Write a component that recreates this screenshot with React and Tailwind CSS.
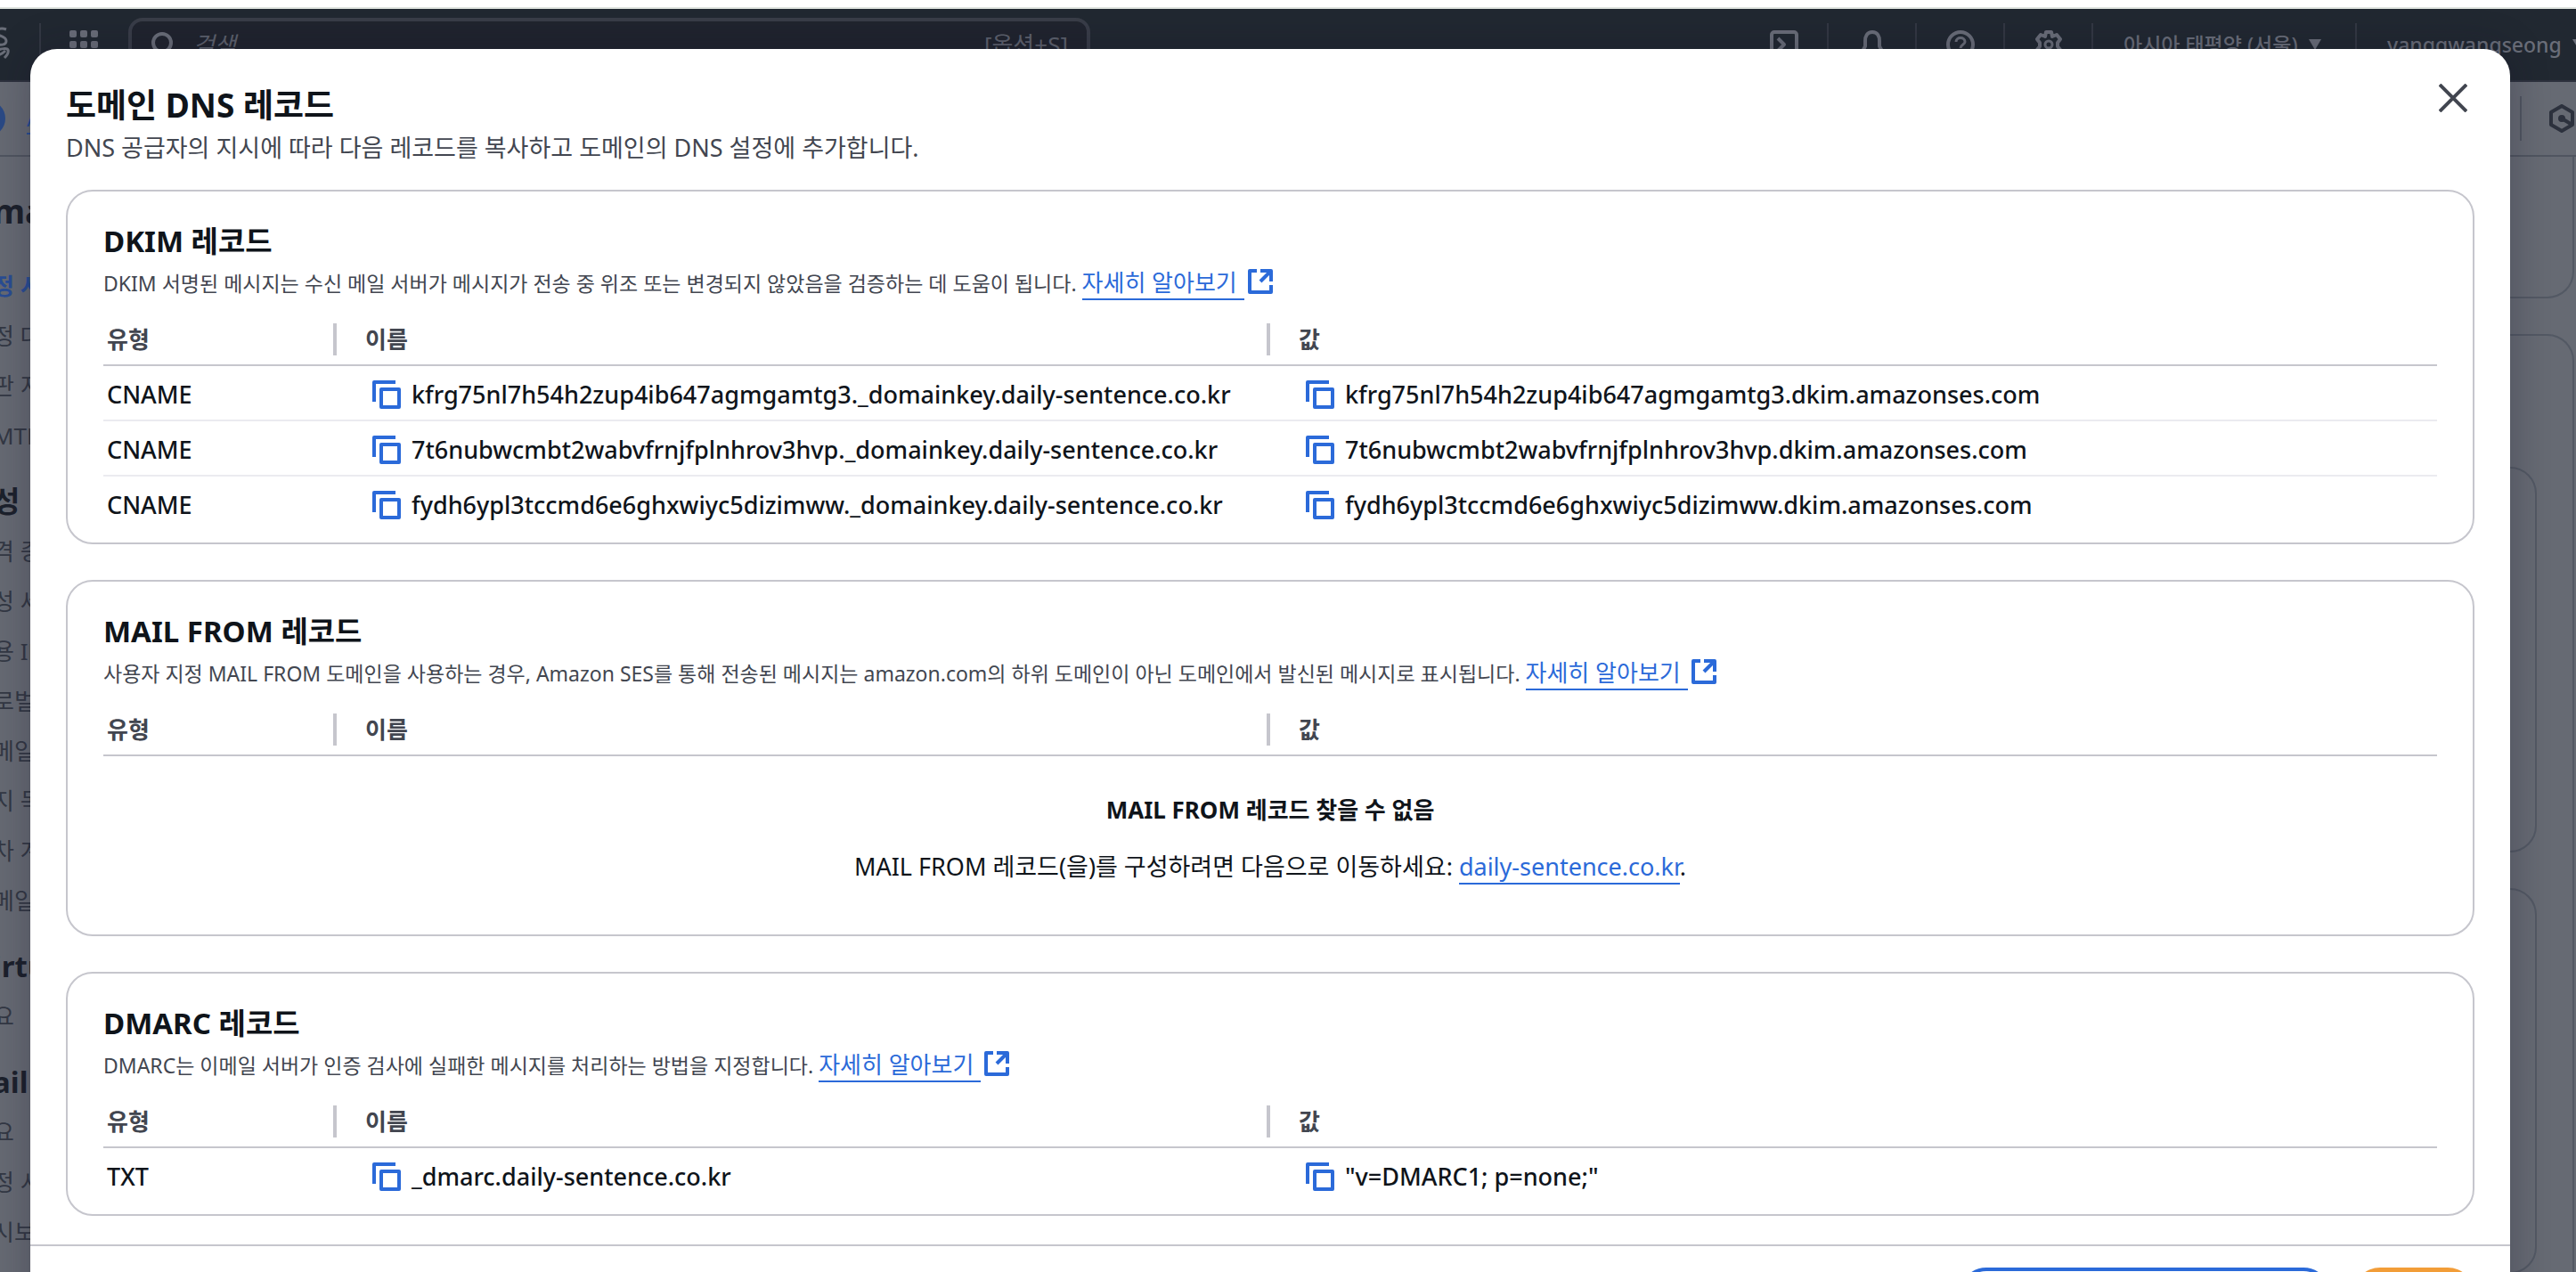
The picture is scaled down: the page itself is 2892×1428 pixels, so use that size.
const LABELS = { type: "유형", name: "이름", value: "값" };

const DKIM_ROWS = [
  ["CNAME", "kfrg75nl7h54h2zup4ib647agmgamtg3._domainkey.daily-sentence.co.kr", "kfrg75nl7h54h2zup4ib647agmgamtg3.dkim.amazonses.com"],
  ["CNAME", "7t6nubwcmbt2wabvfrnjfplnhrov3hvp._domainkey.daily-sentence.co.kr", "7t6nubwcmbt2wabvfrnjfplnhrov3hvp.dkim.amazonses.com"],
  ["CNAME", "fydh6ypl3tccmd6e6ghxwiyc5dizimww._domainkey.daily-sentence.co.kr", "fydh6ypl3tccmd6e6ghxwiyc5dizimww.dkim.amazonses.com"],
];

const DMARC_ROWS = [["TXT", "_dmarc.daily-sentence.co.kr", '"v=DMARC1; p=none;"']];

const SIDE_GROUPS = [
  { items: ["정 시", "정 대", "판 지", "MTP"], active: 0 },
  { title: "성", items: ["격 증", "성 세", "용 IP", "로벌", "메일", "지 목", "차 계", "메일"] },
  { title: "irtu", items: ["요"] },
  { title: "ail", items: ["요", "정 시", "시보"] },
];

function CopyIcon() {
  return (
    <svg viewBox="0 0 32 32" className="size-8" fill="none" stroke="currentColor" strokeWidth="4" strokeLinejoin="round" aria-hidden="true">
      <path d="M2 24V2H26" />
      <path d="M10 10H30V30H10Z" />
    </svg>
  );
}

function ExternalIcon() {
  return (
    <svg viewBox="0 0 28 28" className="ml-1 inline-block size-7 align-[-3px]" fill="none" stroke="currentColor" strokeWidth="4" strokeLinejoin="round" aria-hidden="true">
      <path d="M10 2H2V26H26V18" />
      <path d="M14 2H26V14" />
      <path d="M14 14L25 3" />
    </svg>
  );
}

function LearnMore() {
  return (
    <a href="#learn-more" className="text-[26px] leading-none text-[#2b6ad9]">
      <span className="border-b-2 border-[#2b6ad9] pr-2">자세히 알아보기</span>
      <ExternalIcon />
    </a>
  );
}

function CopyCell({ text }) {
  return (
    <div className="flex items-center gap-3 pl-10">
      <button type="button" aria-label="복사" className="text-[#2b6ad9]">
        <CopyIcon />
      </button>
      <span>{text}</span>
    </div>
  );
}

function HeaderCell({ label, divider, className }) {
  return (
    <th scope="col" className={`h-[58px] border-b-2 border-[#c6c6cd] p-0 text-left font-bold ${className}`}>
      <div className="flex h-9 items-center justify-between">
        <span>{label}</span>
        {divider && <span className="h-9 w-1 bg-[#c6c6cd]" />}
      </div>
    </th>
  );
}

function RecordCard({ title, description, rows = [], children }) {
  return (
    <section className="rounded-[30px] border-2 border-[#c6c6cd] px-10 pt-[34px] pb-3">
      <h2 className="text-[33px] leading-[44px] font-bold">{title}</h2>
      <p className="mb-[10px] text-[23px] leading-[50px] text-[#424650]">
        {description} <LearnMore />
      </p>
      <table className="w-full table-fixed border-separate border-spacing-0">
        <thead className="text-[26px] text-[#424650]">
          <tr>
            <HeaderCell label={LABELS.type} divider className="w-[10%] pl-1" />
            <HeaderCell label={LABELS.name} divider className="w-[40%] pl-8" />
            <HeaderCell label={LABELS.value} className="w-[50%] pl-8" />
          </tr>
        </thead>
        <tbody className="text-[27px] font-medium [&>tr:last-child>td]:border-transparent">
          {rows.map(([type, name, value]) => (
            <tr key={name}>
              <td className="h-[62px] border-b-2 border-[#ebebf0] p-0 pt-1 pl-1">{type}</td>
              <td className="h-[62px] border-b-2 border-[#ebebf0] p-0 pt-1"><CopyCell text={name} /></td>
              <td className="h-[62px] border-b-2 border-[#ebebf0] p-0 pt-1"><CopyCell text={value} /></td>
            </tr>
          ))}
        </tbody>
      </table>
      {children}
    </section>
  );
}

function NavDivider() {
  return <span className="h-12 w-[2px] shrink-0 bg-[#333843]" />;
}

function IconSlot({ children, label }) {
  return (
    <button type="button" aria-label={label} className="flex w-[97px] shrink-0 justify-center">
      <svg viewBox="0 0 32 32" className="size-8" fill="none" stroke="currentColor" strokeWidth="4" strokeLinejoin="round" aria-hidden="true">
        {children}
      </svg>
    </button>
  );
}

function TopNav() {
  return (
    <header className="flex h-[82px] shrink-0 items-center border-b-2 border-[#2d313d] bg-[#212831] text-[23px] text-[#6a6e79]">
      <svg viewBox="0 0 44 80" className="h-20 w-11 shrink-0" fill="none" stroke="currentColor" strokeWidth="3" aria-hidden="true">
        <path d="M7 23C2 21 -4 22 -4 26C-4 31 7 30 7 36C7 41 0 41 -6 39" />
        <path d="M-4 47C2 44 8 44 9 46C10 49 7 53 5 55M-6 53C-1 52 3 50 6 47" />
      </svg>
      <NavDivider />
      <button type="button" aria-label="서비스" className="ml-8 grid shrink-0 grid-cols-3 gap-1">
        {Array.from({ length: 9 }, (_, i) => (
          <span key={i} className="size-2 rounded-xs bg-current" />
        ))}
      </button>
      <label className="ml-[34px] flex h-[60px] w-[1080px] shrink-0 items-center rounded-2xl border-4 border-[#393d48] bg-[#20242e] px-[21px]">
        <svg viewBox="0 0 32 32" className="size-8 shrink-0" fill="none" stroke="currentColor" strokeWidth="4" aria-hidden="true">
          <circle cx="13" cy="14" r="10" />
          <path d="M20 21L29 30" />
        </svg>
        <input aria-label="검색" placeholder="검색" className="ml-4 min-w-0 flex-1 bg-transparent text-[26px] italic outline-none placeholder:text-[#5e626d]" />
        <span className="text-[26px] text-[#5e626d]">[옵션+S]</span>
      </label>
      <div className="ml-auto flex shrink-0 items-center">
        <IconSlot label="CloudShell">
          <rect x="2" y="2" width="28" height="28" rx="3" />
          <path d="M9 9L16 16L9 23M17 23H24" />
        </IconSlot>
        <NavDivider />
        <IconSlot label="알림">
          <path d="M16 2C10 2 8 7 8 12V18L4 25H28L24 18V12C24 7 22 2 16 2ZM12 29H20" />
        </IconSlot>
        <NavDivider />
        <IconSlot label="도움말">
          <circle cx="16" cy="16" r="14" />
          <path d="M11 13C11 7 21 7 21 13C21 16 16 16 16 20M16 22V25" strokeWidth="3" />
        </IconSlot>
        <NavDivider />
        <IconSlot label="설정">
          <path d="M13 2H19L20 7L25 5L29 10L26 14V18L29 22L25 27L20 25L19 30H13L12 25L7 27L3 22L6 18V14L3 10L7 5L12 7Z" />
          <circle cx="16" cy="16" r="4" strokeWidth="3" />
        </IconSlot>
        <NavDivider />
        <button type="button" className="flex w-[294px] items-center gap-3 pl-[34px] font-medium whitespace-nowrap">
          아시아 태평양 (서울)
          <svg viewBox="0 0 14 12" className="h-3 w-[14px]" fill="currentColor" aria-hidden="true"><path d="M0 0H14L7 12Z" /></svg>
        </button>
        <NavDivider />
        <button type="button" className="flex w-[246px] items-center gap-3 pl-[34px] font-medium whitespace-nowrap">
          yanggwangseong
          <svg viewBox="0 0 14 12" className="h-3 w-[14px] shrink-0" fill="currentColor" aria-hidden="true"><path d="M0 0H14L7 12Z" /></svg>
        </button>
      </div>
    </header>
  );
}

function Breadcrumbs() {
  return (
    <div className="flex h-[84px] shrink-0 items-center border-b-2 border-[#505560] text-[26px] text-[#2a4d94]">
      <span className="-ml-[34px] size-10 shrink-0 rounded-full bg-[#2a4a86]" />
      <a href="#home" className="ml-6 border-b-2 border-[#2a4d94] leading-[34px]">A</a>
      <span className="ml-auto h-[50px] w-[2px] bg-[#505560]" />
      <button type="button" aria-label="정보" className="ml-[31px] mr-[2px] text-[#2c313d]">
        <svg viewBox="0 0 28 32" className="h-8 w-7" fill="none" stroke="currentColor" strokeWidth="4" strokeLinejoin="round" aria-hidden="true">
          <path d="M14 2L26 9V23L14 30L2 23V9Z" />
          <circle cx="14" cy="16" r="4" fill="currentColor" stroke="none" />
          <path d="M14 16L24 22" />
        </svg>
      </button>
    </div>
  );
}

function SideNav() {
  return (
    <nav className="-ml-2 w-[540px] shrink-0 text-[26px] text-[#333844]">
      <p className="flex h-[117px] items-center pt-1 text-[37px] font-bold text-[#1c212c]">ma</p>
      {SIDE_GROUPS.map((group, g) => (
        <div key={g}>
          {group.title && <h3 className="mt-[18px] flex h-14 items-center text-[33px] font-bold text-[#1c212c]">{group.title}</h3>}
          <ul>
            {group.items.map((item, i) => (
              <li key={i} className="h-14">
                <a href="#nav" className={`flex h-14 items-center ${group.active === i ? "font-bold text-[#2a4d94]" : ""}`}>{item}</a>
              </li>
            ))}
          </ul>
        </div>
      ))}
    </nav>
  );
}

function Background() {
  return (
    <div className="flex h-screen flex-col bg-[#666a73]">
      <div className="h-[10px] shrink-0 border-b-2 border-[#dfe4df] bg-white" />
      <TopNav />
      <Breadcrumbs />
      <div className="flex min-h-0 flex-1 overflow-hidden">
        <SideNav />
        <main className="flex min-w-0 flex-1 flex-col pr-[2px]">
          <div className="h-[159px] shrink-0 rounded-b-[30px] border-2 border-t-0 border-[#535964]" />
          <div className="mt-10 flex flex-1 flex-col gap-10 rounded-t-[30px] border-2 border-b-0 border-[#535964] px-10 pt-[147px]">
            <div className="h-[433px] shrink-0 rounded-[30px] border-2 border-[#535964]" />
            <div className="h-[433px] shrink-0 rounded-[30px] border-2 border-[#535964]" />
          </div>
        </main>
      </div>
    </div>
  );
}

export default function App() {
  return (
    <div className="relative h-screen overflow-hidden font-['Noto_Sans','Noto_Sans_CJK_KR',sans-serif] text-[#0f141a]">
      <Background />
      <div className="absolute inset-0 overflow-hidden pt-[55px] pr-[74px] pl-[34px]">
        <div role="dialog" aria-modal="true" aria-labelledby="dialog-title" className="rounded-[30px] bg-white shadow-[0_0_44px_rgba(20,16,40,0.3)]">
          <header className="flex items-start justify-between px-10 pt-[39px]">
            <div>
              <h1 id="dialog-title" className="text-[37px] leading-[48px] font-bold">도메인 DNS 레코드</h1>
              <p className="text-[27px] leading-[48px] text-[#424650]">DNS 공급자의 지시에 따라 다음 레코드를 복사하고 도메인의 DNS 설정에 추가합니다.</p>
            </div>
            <button type="button" aria-label="닫기" className="mr-2 text-[#424650]">
              <svg viewBox="0 0 32 32" className="size-8" fill="none" stroke="currentColor" strokeWidth="4" aria-hidden="true">
                <path d="M1 1L31 31M31 1L1 31" />
              </svg>
            </button>
          </header>
          <div className="flex flex-col gap-10 px-10 pt-[23px] pb-8">
            <RecordCard
              title="DKIM 레코드"
              description="DKIM 서명된 메시지는 수신 메일 서버가 메시지가 전송 중 위조 또는 변경되지 않았음을 검증하는 데 도움이 됩니다."
              rows={DKIM_ROWS}
            />
            <RecordCard
              title="MAIL FROM 레코드"
              description="사용자 지정 MAIL FROM 도메인을 사용하는 경우, Amazon SES를 통해 전송된 메시지는 amazon.com의 하위 도메인이 아닌 도메인에서 발신된 메시지로 표시됩니다."
            >
              <div className="flex h-[188px] flex-col items-center pt-[38px]">
                <p className="text-[26px] leading-[44px] font-bold">MAIL FROM 레코드 찾을 수 없음</p>
                <p className="mt-5 text-[27px] leading-[44px]">
                  MAIL FROM 레코드(을)를 구성하려면 다음으로 이동하세요:{" "}
                  <a href="#domain" className="border-b-2 border-[#2b6ad9] text-[#2b6ad9]">daily-sentence.co.kr</a>.
                </p>
              </div>
            </RecordCard>
            <RecordCard
              title="DMARC 레코드"
              description="DMARC는 이메일 서버가 인증 검사에 실패한 메시지를 처리하는 방법을 지정합니다."
              rows={DMARC_ROWS}
            />
          </div>
          <footer className="flex justify-end gap-[26px] border-t-2 border-[#c6c6cd] px-10 py-6">
            <button type="button" aria-label="레코드 세트 다운로드" className="h-[60px] w-[416px] rounded-full border-4 border-[#2b6ad9]" />
            <button type="button" aria-label="완료" className="h-[60px] w-[136px] rounded-full bg-[#f29d38]" />
          </footer>
        </div>
      </div>
    </div>
  );
}
